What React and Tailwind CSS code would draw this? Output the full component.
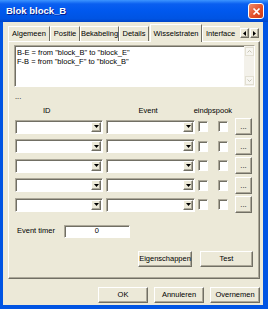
import React from 'react';

const raised =
  'border border-t-white border-l-white border-r-[#716f64] border-b-[#716f64] shadow-[inset_-1px_-1px_0_#aca899]';
const sunken =
  'border border-t-[#aca899] border-l-[#aca899] border-r-white border-b-white shadow-[inset_1px_1px_0_#716f64]';

function Button({ label, className = '' }) {
  return (
    <div className={`${raised} bg-[#ece9d8] flex items-center justify-center text-[7.5px] text-black whitespace-nowrap ${className}`}>
      {label}
    </div>
  );
}

function Combo({ className = '' }) {
  return (
    <div className={`${sunken} bg-white h-[14px] flex justify-end items-stretch p-[1px] ${className}`}>
      <div className={`${raised} w-[10px] bg-[#ece9d8] flex items-center justify-center`}>
        <svg width="5" height="3" viewBox="0 0 5 3">
          <path d="M0 0h5L2.5 3z" fill="#000" />
        </svg>
      </div>
    </div>
  );
}

function Check() {
  return <div className={`${sunken} w-[10px] h-[11px] bg-white`} />;
}

function Row() {
  return (
    <div className="flex items-center h-[19.5px]">
      <Combo className="w-[88px]" />
      <Combo className="w-[89px] ml-[3px]" />
      <div className="ml-[3px]"><Check /></div>
      <div className="ml-[10px]"><Check /></div>
      <Button label="..." className="w-[17px] h-[17px] ml-[7px]" />
    </div>
  );
}

const tabs = [
  ['Algemeen', 'w-[42px]'],
  ['Positie', 'w-[30px]'],
  ['Bekabeling', 'w-[39px]'],
  ['Details', 'w-[30px]'],
];

export default function App() {
  return (
    <div className="w-[268px] h-[309px] flex flex-col bg-[#0054e3] font-['Liberation_Sans',sans-serif] overflow-hidden">
      <div className="h-[22px] shrink-0 flex items-center pl-[6px] pr-[4px] bg-[linear-gradient(to_bottom,#3d95ff_0%,#0a5ff0_18%,#0058ee_50%,#0054e3_85%,#0045c8_100%)]">
        <span className="text-white font-bold text-[9.5px] [text-shadow:1px_1px_0_#0a1e8a]">Blok block_B</span>
        <div className="ml-auto w-[16px] h-[16px] rounded-[3px] border border-white bg-[linear-gradient(135deg,#f08a6a,#e24c25_60%,#c93c18)] flex items-center justify-center">
          <svg width="9" height="9" viewBox="0 0 9 9">
            <path d="M1.5 1.5l6 6M7.5 1.5l-6 6" stroke="#fff" strokeWidth="1.7" />
          </svg>
        </div>
      </div>

      <div className="flex-1 ml-[3px] mr-[5px] mb-[4px] bg-[#ece9d8] flex flex-col text-black text-[7.5px]">
        <div className="flex items-end h-[19px] pl-[5px] pr-[3px]">
          {tabs.map(([t, w]) => (
            <div
              key={t}
              className={`${w} h-[15px] flex items-center justify-center whitespace-nowrap border-t border-l border-t-white border-l-white border-r border-r-[#716f64]`}
            >
              {t}
            </div>
          ))}
          <div className="w-[52px] ml-[1px] h-[18px] flex items-center justify-center whitespace-nowrap border-t border-l border-t-white border-l-white border-r border-r-[#716f64] bg-[#ece9d8] relative top-[1px]">
            Wisselstraten
          </div>
          <div className="h-[15px] w-[38px] pl-[3px] overflow-hidden flex items-center whitespace-nowrap border-t border-l border-t-white border-l-white">
            Interface
          </div>
          <div className="flex mb-[3px] gap-[1px]">
            <Button label={<svg width="3" height="5" viewBox="0 0 3 5"><path d="M3 0v5L0 2.5z" fill="#000" /></svg>} className="w-[9px] h-[10px]" />
            <Button label={<svg width="3" height="5" viewBox="0 0 3 5"><path d="M0 0v5l3-2.5z" fill="#000" /></svg>} className="w-[9px] h-[10px]" />
          </div>
        </div>

        <div className="ml-[5px] mr-[3px] h-[238px] border border-t-white border-l-white border-r-[#716f64] border-b-[#716f64] shadow-[inset_-1px_-1px_0_#aca899] flex flex-col pl-[5px] pr-[4px] pt-[3px]">
          <div className={`${sunken} bg-white h-[42px] flex`}>
            <div className="flex-1 pl-[2px] pt-[2px] leading-[9px]">
              <div>B-E = from "block_B" to "block_E"</div>
              <div>F-B = from "block_F" to "block_B"</div>
            </div>
            <div className="w-[10px] bg-[#f3f1ea] flex flex-col justify-between items-center py-[1px]">
              <div className="w-[9px] h-[9px] bg-[#f7f6f1] border border-[#e2dfd2] flex items-center justify-center">
                <svg width="5" height="3" viewBox="0 0 5 3"><path d="M0.5 2.5L2.5 0.5L4.5 2.5" stroke="#c5c2b2" fill="none" /></svg>
              </div>
              <div className="w-[9px] h-[9px] bg-[#f7f6f1] border border-[#e2dfd2] flex items-center justify-center">
                <svg width="5" height="3" viewBox="0 0 5 3"><path d="M0.5 0.5L2.5 2.5L4.5 0.5" stroke="#c5c2b2" fill="none" /></svg>
              </div>
            </div>
          </div>

          <div className="leading-[8px] mt-[6px] ml-[1px]">...</div>
          <div className="flex h-[13px] items-center mt-[3px]">
            <span className="ml-[29px]">ID</span>
            <span className="ml-[88px]">Event</span>
            <span className="ml-[36px] whitespace-nowrap">eindpspook</span>
          </div>
          <div className="flex flex-col ml-[1px]">
            <Row />
            <Row />
            <Row />
            <Row />
            <Row />
          </div>

          <div className="flex items-center mt-[10px] ml-[3px]">
            <span>Event timer</span>
            <div className={`${sunken} bg-white w-[66px] h-[13px] ml-[9px] flex items-center justify-center`}>0</div>
          </div>

          <div className="flex justify-end mt-[13px] mr-[2px] gap-[8px]">
            <Button label="Eigenschappen" className="w-[54px] h-[16px]" />
            <Button label="Test" className="w-[53px] h-[16px]" />
          </div>
        </div>

        <div className="flex justify-end gap-[6px] mt-[8px] mr-[3px]">
          <Button label="OK" className="w-[50px] h-[16px]" />
          <Button label="Annuleren" className="w-[50px] h-[16px]" />
          <Button label="Overnemen" className="w-[50px] h-[16px]" />
        </div>
      </div>
    </div>
  );
}
